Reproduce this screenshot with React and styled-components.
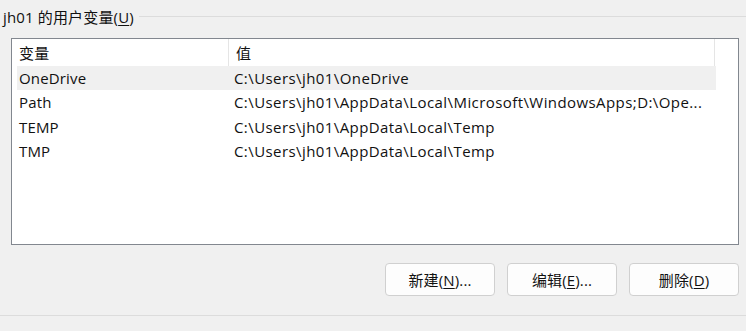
import styled, { createGlobalStyle } from "styled-components";

const GlobalStyle = createGlobalStyle`
  html, body {
    margin: 0;
    padding: 0;
    background: #f0f0f0;
  }
  body {
    font-family: "Open Sans", "Noto Sans CJK SC", sans-serif;
    font-size: 15px;
    letter-spacing: 0.15px;
    color: #111111;
  }
`;

const variables = [
  { name: "OneDrive", value: "C:\\Users\\jh01\\OneDrive", selected: true },
  {
    name: "Path",
    value: "C:\\Users\\jh01\\AppData\\Local\\Microsoft\\WindowsApps;D:\\Ope...",
  },
  { name: "TEMP", value: "C:\\Users\\jh01\\AppData\\Local\\Temp" },
  { name: "TMP", value: "C:\\Users\\jh01\\AppData\\Local\\Temp" },
];

export default function App() {
  return (
    <>
      <GlobalStyle />
      <Page>
        <GroupTitle>
          <span>
            jh01 的用户变量(<u>U</u>)
          </span>
          <Rule />
        </GroupTitle>

        <ListBox>
          <HeaderRow>
            <HeaderCell $width={217}>变量</HeaderCell>
            <HeaderCell $width={486}>值</HeaderCell>
          </HeaderRow>
          {variables.map((v) => (
            <Row key={v.name} $selected={v.selected}>
              <NameCell>{v.name}</NameCell>
              <ValueCell>{v.value}</ValueCell>
            </Row>
          ))}
        </ListBox>

        <ButtonBar>
          <Button>
            新建(<u>N</u>)...
          </Button>
          <Button>
            编辑(<u>E</u>)...
          </Button>
          <Button>
            删除(<u>D</u>)
          </Button>
        </ButtonBar>

        <BottomRule />
      </Page>
    </>
  );
}

const Page = styled.div`
  width: 746px;
  height: 331px;
  overflow: hidden;
  display: flex;
  flex-direction: column;
`;

const GroupTitle = styled.div`
  display: flex;
  align-items: center;
  gap: 5px;
  height: 30px;
  padding-left: 3px;
  margin-top: 1px;

  & u {
    text-underline-offset: 2px;
  }
`;

const Rule = styled.div`
  flex: 1;
  height: 1px;
  background: #dcdcdc;
`;

const ListBox = styled.div`
  margin: 7px 0 0 11px;
  width: 726px;
  height: 205px;
  border: 1px solid #82878f;
  background: #ffffff;
`;

const HeaderRow = styled.div`
  display: flex;
  height: 27px;
`;

const HeaderCell = styled.div`
  width: ${(p) => p.$width}px;
  border-right: 1px solid #e5e5e5;
  padding-left: 7px;
  box-sizing: border-box;
  display: flex;
  align-items: center;
`;

const Row = styled.div`
  display: flex;
  align-items: center;
  height: 24.3px;
  margin-left: 5px;
  width: 699px;
  background: ${(p) => (p.$selected ? "#f0f0f0" : "transparent")};
`;

const NameCell = styled.div`
  width: 212px;
  padding-left: 2px;
  box-sizing: border-box;
`;

const ValueCell = styled.div`
  padding-left: 5px;
  white-space: nowrap;
  letter-spacing: 0.42px;
`;

const ButtonBar = styled.div`
  display: flex;
  justify-content: flex-end;
  gap: 12px;
  margin-top: 18px;
  padding-right: 7px;
`;

const Button = styled.button`
  width: 110px;
  height: 33px;
  border: 1px solid #d0d0d0;
  border-radius: 4px;
  background: #fdfdfd;
  font-family: inherit;
  font-size: 15px;
  letter-spacing: 0.15px;
  color: #111111;
  padding: 0;

  & u {
    text-underline-offset: 2px;
  }
`;

const BottomRule = styled.div`
  height: 1px;
  background: #dcdcdc;
  margin-top: 19px;
`;
